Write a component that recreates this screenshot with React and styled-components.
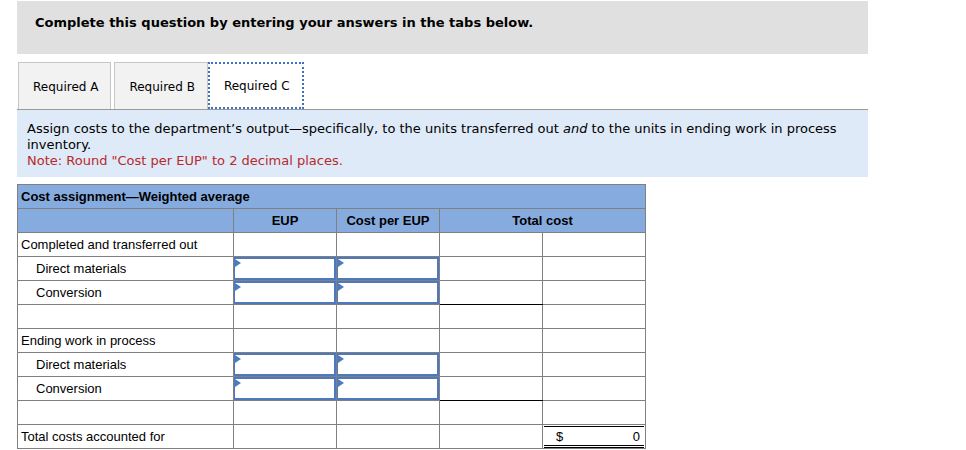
import React from 'react';
import styled, { createGlobalStyle } from 'styled-components';

const GlobalStyle = createGlobalStyle`
    body {
        margin: 0;
        background: white;
        font-family: "DejaVu Sans", Verdana, sans-serif;
        color: #000;
    }
`

const rows = [
    {label: 'Completed and transferred out'},
    {label: 'Direct materials', indent: true, input: true},
    {label: 'Conversion', indent: true, input: true, underline: true},
    {label: ''},
    {label: 'Ending work in process'},
    {label: 'Direct materials', indent: true, input: true},
    {label: 'Conversion', indent: true, input: true, underline: true},
    {label: ''},
]

const App = () => {
  return (
    <Page>
        <GlobalStyle />
        <Instructions>Complete this question by entering your answers in the tabs below.</Instructions>
        <Tabs>
            <Tab>Required A</Tab>
            <Tab>Required B</Tab>
            <Tab active>Required C</Tab>
        </Tabs>
        <Prompt>
            Assign costs to the department’s output—specifically, to the units transferred out <em>and</em> to the units in ending work in process inventory.
            <Note>Note: Round "Cost per EUP" to 2 decimal places.</Note>
        </Prompt>
        <Sheet>
            <colgroup>
                <col style={{width: 216}} />
                <col style={{width: 103}} />
                <col style={{width: 103}} />
                <col style={{width: 103}} />
                <col style={{width: 103}} />
            </colgroup>
            <tbody>
                <tr>
                    <TitleCell colSpan={5}>Cost assignment—Weighted average</TitleCell>
                </tr>
                <tr>
                    <HeadCell />
                    <HeadCell>EUP</HeadCell>
                    <HeadCell>Cost per EUP</HeadCell>
                    <HeadCell colSpan={2}>Total cost</HeadCell>
                </tr>
                {rows.map((row, i) => (
                    <tr key={i}>
                        <LabelCell indent={row.indent}>{row.label}</LabelCell>
                        <Cell>{row.input && <Entry />}</Cell>
                        <Cell>{row.input && <Entry />}</Cell>
                        <Cell underline={row.underline} />
                        <Cell />
                    </tr>
                ))}
                <tr>
                    <LabelCell>Total costs accounted for</LabelCell>
                    <Cell />
                    <Cell />
                    <Cell />
                    <Cell>
                        <Total>
                            <span>$</span>
                            <span>0</span>
                        </Total>
                    </Cell>
                </tr>
            </tbody>
        </Sheet>
    </Page>
  )
}

export default App;

const Page = styled.div`
    padding: 1px 0 0 17px;
    width: 851px;
`

const Instructions = styled.div`
    background: #e0e0e0;
    height: 53px;
    box-sizing: border-box;
    padding: 14px 0 0 18px;
    font-size: 13px;
    font-weight: bold;
    line-height: 16px;
`

const Tabs = styled.div`
    display: flex;
    gap: 3px;
    margin: 8px 0 0 1px;
    height: 47px;
`

const Tab = styled.div`
    display: flex;
    align-items: center;
    padding: 1px 12px 0 14px;
    font-size: 12px;
    box-sizing: border-box;
    white-space: nowrap;
    background: ${({active}) => active ? 'white' : '#f2f2f2'};
    border: ${({active}) => active ? '2px dotted #3f6fbf' : '1px solid #c6c6c6'};
    border-bottom: ${({active}) => active ? '2px dotted #3f6fbf' : 'none'};
    margin-left: ${({active}) => active ? '-3px' : '0'};
`

const Prompt = styled.div`
    background: #deeaf7;
    border-top: 1px solid #9a9a9a;
    padding: 11px 10px 8px 10px;
    font-size: 13px;
    line-height: 16px;

    em {
        font-style: italic;
    }
`

const Note = styled.div`
    color: #b8292c;
`

const Sheet = styled.table`
    margin-top: 7px;
    border-collapse: collapse;
    table-layout: fixed;
    width: 628px;
    font-family: "Liberation Sans", Arial, sans-serif;
    font-size: 13px;
    border: 1px solid #808080;

    tr {
        height: 24px;
    }

    td {
        padding: 0;
        border: 1px solid #808080;
    }
`

const TitleCell = styled.td`
    background: #86acdf;
    font-weight: bold;
    padding-left: 3px !important;
`

const HeadCell = styled.td`
    background: #86acdf;
    font-weight: bold;
    text-align: center;
`

const LabelCell = styled.td`
    padding-left: ${({indent}) => indent ? '18px' : '3px'} !important;
`

const Cell = styled.td`
    position: relative;
    ${({underline}) => underline && 'border-bottom: 1px solid #000 !important;'}
`

const Entry = styled.div`
    position: absolute;
    inset: 0;
    border: 2px solid #4f79bd;
    border-left-width: 1px;
    background: white;

    &::before {
        content: '';
        position: absolute;
        top: 0;
        left: 0;
        border-top: 4px solid transparent;
        border-bottom: 4px solid transparent;
        border-left: 6px solid #4a7bc6;
    }
`

const Total = styled.div`
    position: absolute;
    inset: 1px 1px 0 1px;
    display: flex;
    justify-content: space-between;
    align-items: center;
    padding: 0 4px 0 12px;
    border-top: 1px solid #000;
    border-bottom: 3px double #000;
`
